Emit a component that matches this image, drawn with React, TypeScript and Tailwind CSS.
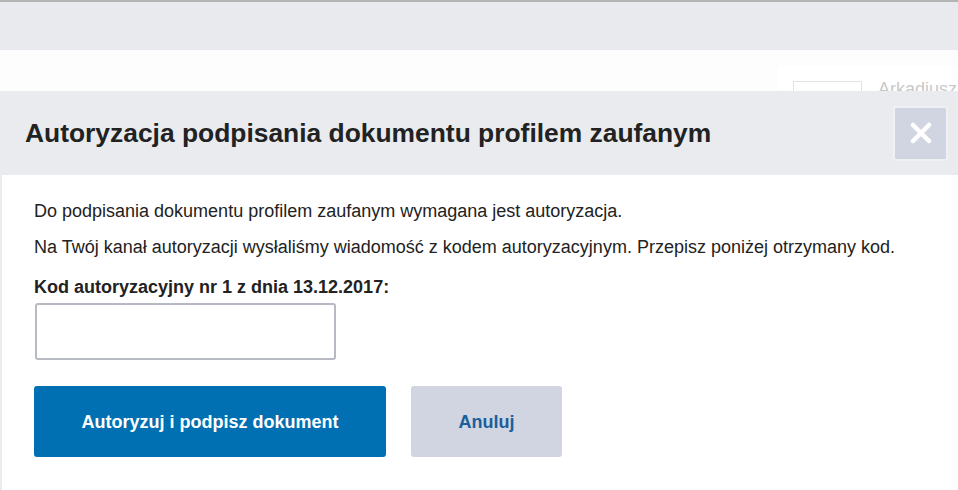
import * as React from "react";

export default function App() {
  const [code, setCode] = React.useState("");

  return (
    <div className="relative h-[490px] w-full overflow-hidden bg-white font-['Liberation_Sans',Arial,sans-serif] text-[#222]">
      {/* Page behind the dialog */}
      <div className="h-[2px] bg-[#b4b4b4]" />
      <div className="h-[48px] bg-[#e9eaed]" />
      <div className="flex h-[41px] justify-end bg-[#fdfdfd]">
        <div className="mt-[16px] flex w-[180px] items-end gap-[16px] overflow-hidden bg-white pl-[15px]">
          <div className="h-[10px] w-[69px] shrink-0 border-x border-t border-[#e3e3e3]" />
          <span className="shrink-0 translate-y-[9px] text-[18px] leading-[22px] text-[#c9c9c9]">Arkadiusz</span>
        </div>
      </div>

      {/* Dialog */}
      <div className="flex h-[84px] items-center justify-between bg-[#e9ebee] pl-[25px] pr-[10px]">
        <h1 className="text-[26.4px] font-bold leading-[30px] text-[#222]">
          Autoryzacja podpisania dokumentu profilem zaufanym
        </h1>
        <button className="flex h-[55px] w-[55px] items-center justify-center rounded-[3px] border-[2px] border-[#eef0f3] bg-[#d1d5e2]">
          <svg width="22" height="22" viewBox="0 0 22 22" fill="none" stroke="white" strokeWidth="4.5" strokeLinecap="round">
            <path d="M3 3 L19 19 M19 3 L3 19" />
          </svg>
        </button>
      </div>
      <div className="min-h-[315px] border-l-[2px] border-[#e9ebee] pl-[32px] pt-[25px] text-[18px] leading-[22px]">
        <p className="mb-[14px]">Do podpisania dokumentu profilem zaufanym wymagana jest autoryzacja.</p>
        <p className="mb-[18px]">
          Na Twój kanał autoryzacji wysłaliśmy wiadomość z kodem autoryzacyjnym. Przepisz poniżej otrzymany kod.
        </p>
        <label className="block font-bold">Kod autoryzacyjny nr 1 z dnia 13.12.2017:</label>
        <input
          value={code}
          onChange={(e) => setCode(e.target.value)}
          className="ml-[1px] mt-[5px] block h-[57px] w-[301px] rounded-[3px] border-[2px] border-[#b7bac3] bg-white px-3 outline-none"
        />
        <div className="mt-[26px] flex gap-[25px]">
          <button className="h-[71px] w-[352px] rounded-[3px] bg-[#0070b3] text-[18px] font-bold text-white">
            Autoryzuj i podpisz dokument
          </button>
          <button className="h-[71px] w-[151px] rounded-[3px] bg-[#d0d5e1] text-[18px] font-bold text-[#1b5e9c]">
            Anuluj
          </button>
        </div>
      </div>
    </div>
  );
}
